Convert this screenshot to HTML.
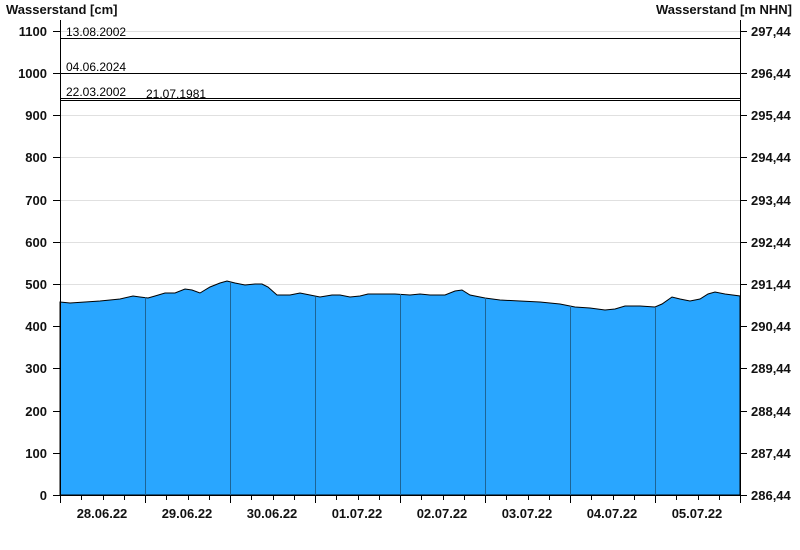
<!DOCTYPE html>
<html><head><meta charset="utf-8"><style>
html,body{margin:0;padding:0;background:#fff;width:800px;height:550px;overflow:hidden}
svg text{font-family:"Liberation Sans",Arial,sans-serif}
</style></head><body>
<svg width="800" height="550" xmlns="http://www.w3.org/2000/svg">
<g stroke="#e0e0e0" stroke-width="1">
<line x1="60" y1="31.5" x2="740" y2="31.5"/><line x1="60" y1="115.5" x2="740" y2="115.5"/>
<line x1="60" y1="157.5" x2="740" y2="157.5"/><line x1="60" y1="200.5" x2="740" y2="200.5"/>
<line x1="60" y1="242.5" x2="740" y2="242.5"/><line x1="60" y1="284.5" x2="740" y2="284.5"/>
<line x1="60" y1="326.5" x2="740" y2="326.5"/><line x1="60" y1="368.5" x2="740" y2="368.5"/>
<line x1="60" y1="411.5" x2="740" y2="411.5"/><line x1="60" y1="453.5" x2="740" y2="453.5"/>
</g>
<polygon fill="#29a6ff" stroke="#000" stroke-width="1" points="60,302 70,303 85,302 100,301 120,299 133,296 140,297 148,298 155,296 165,293 175,293 185,289 192,290 200,293 210,287 220,283 227,281 235,283 245,285 255,284 262,284 268,287 277,295 290,295 300,293 310,295 320,297 332,295 340,295 350,297 360,296 368,294 380,294 395,294 410,295 420,294 430,295 445,295 455,291 462,290 470,295 485,298 500,300 520,301 540,302 560,304 575,307 590,308 605,310 615,309 625,306 640,306 655,307 662,304 672,297 680,299 690,301 700,299 708,294 715,292 725,294 740,296 740,495 60,495"/>
<g stroke="#1d6496" stroke-width="1">
<line x1="145.5" y1="297" x2="145.5" y2="495"/><line x1="230.5" y1="282" x2="230.5" y2="495"/>
<line x1="315.5" y1="297" x2="315.5" y2="495"/><line x1="400.5" y1="294" x2="400.5" y2="495"/>
<line x1="485.5" y1="298" x2="485.5" y2="495"/><line x1="570.5" y1="306" x2="570.5" y2="495"/>
<line x1="655.5" y1="307" x2="655.5" y2="495"/>
</g>
<g stroke="#000" stroke-width="1">
<line x1="60" y1="38.5" x2="740" y2="38.5"/>
<line x1="60" y1="73.5" x2="740" y2="73.5"/>
<line x1="60" y1="98.5" x2="740" y2="98.5"/>
<line x1="60" y1="100.5" x2="740" y2="100.5"/>
<line x1="60.5" y1="20" x2="60.5" y2="496"/>
<line x1="740.5" y1="20" x2="740.5" y2="496"/>
<line x1="60" y1="495.5" x2="741" y2="495.5"/>
</g>
<g fill="#fff"><rect x="130" y="94" width="84" height="4"/></g>
<g font-size="12" fill="#000">
<text x="66" y="36">13.08.2002</text>
<text x="66" y="71">04.06.2024</text>
<text x="66" y="96">22.03.2002</text>
<text x="146" y="98">21.07.1981</text>
</g>
<g stroke="#000" stroke-width="1">
<path d="M53 31.5H60M53 73.5H60M53 115.5H60M53 157.5H60M53 200.5H60M53 242.5H60M53 284.5H60M53 326.5H60M53 368.5H60M53 411.5H60M53 453.5H60M53 495.5H60"/>
<path d="M740 31.5H747M740 73.5H747M740 115.5H747M740 157.5H747M740 200.5H747M740 242.5H747M740 284.5H747M740 326.5H747M740 368.5H747M740 411.5H747M740 453.5H747M740 495.5H747"/>
<path d="M60.5 496V503M145.5 496V503M230.5 496V503M315.5 496V503M400.5 496V503M485.5 496V503M570.5 496V503M655.5 496V503M740.5 496V503"/>
<path d="M81.5 496V500M103.5 496V500M124.5 496V500M166.5 496V500M188.5 496V500M209.5 496V500M251.5 496V500M273.5 496V500M294.5 496V500M336.5 496V500M358.5 496V500M379.5 496V500M421.5 496V500M443.5 496V500M464.5 496V500M506.5 496V500M528.5 496V500M549.5 496V500M591.5 496V500M613.5 496V500M634.5 496V500M676.5 496V500M698.5 496V500M719.5 496V500"/>
</g>
<g font-size="13" font-weight="bold" fill="#111">
<text x="6" y="14">Wasserstand [cm]</text>
<text x="792" y="14" text-anchor="end">Wasserstand [m NHN]</text>
</g>
<g font-size="13" font-weight="bold" fill="#111" text-anchor="end">
<text x="47" y="36">1100</text><text x="47" y="78">1000</text><text x="47" y="120">900</text>
<text x="47" y="162">800</text><text x="47" y="205">700</text><text x="47" y="247">600</text>
<text x="47" y="289">500</text><text x="47" y="331">400</text><text x="47" y="373">300</text>
<text x="47" y="416">200</text><text x="47" y="458">100</text><text x="47" y="500">0</text>
</g>
<g font-size="13" font-weight="bold" fill="#111">
<text x="751" y="36">297,44</text><text x="751" y="78">296,44</text><text x="751" y="120">295,44</text>
<text x="751" y="162">294,44</text><text x="751" y="205">293,44</text><text x="751" y="247">292,44</text>
<text x="751" y="289">291,44</text><text x="751" y="331">290,44</text><text x="751" y="373">289,44</text>
<text x="751" y="416">288,44</text><text x="751" y="458">287,44</text><text x="751" y="500">286,44</text>
</g>
<g font-size="13" font-weight="bold" fill="#111" text-anchor="middle">
<text x="102" y="518">28.06.22</text><text x="187" y="518">29.06.22</text><text x="272" y="518">30.06.22</text>
<text x="357" y="518">01.07.22</text><text x="442" y="518">02.07.22</text><text x="527" y="518">03.07.22</text>
<text x="612" y="518">04.07.22</text><text x="697" y="518">05.07.22</text>
</g>
</svg>
</body></html>
